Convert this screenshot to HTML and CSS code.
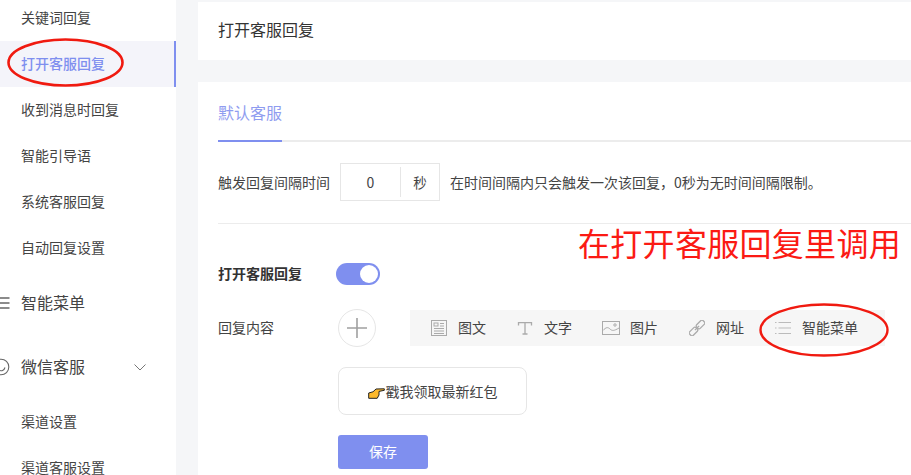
FILE: index.html
```html
<!DOCTYPE html>
<html lang="zh">
<head>
<meta charset="utf-8">
<title>打开客服回复</title>
<link rel="stylesheet" href="styles.css">
</head>
<body>
<div class="page">
  <aside class="sidebar">
    <div class="item">关键词回复</div>
    <div class="item active">打开客服回复</div>
    <div class="item">收到消息时回复</div>
    <div class="item">智能引导语</div>
    <div class="item">系统客服回复</div>
    <div class="item">自动回复设置</div>
    <div class="group">
      <svg class="group-icon" width="10" height="12" viewBox="0 0 10 12"><path d="M0 1h9.500M0 6h9.500M0 11h9.500" stroke="#666" stroke-width="1.500" fill="none"/></svg>
      <span>智能菜单</span>
    </div>
    <div class="group">
      <svg class="group-icon" width="10" height="18" viewBox="0 0 10 18"><circle cx="1" cy="9" r="7.800" fill="none" stroke="#666" stroke-width="1.100"/><path d="M-1 12c2.500 1.500 5 .8 6-2.500" fill="none" stroke="#666" stroke-width="1.100"/></svg>
      <span>微信客服</span>
      <svg class="chevron" width="12" height="7" viewBox="0 0 12 7"><path d="M.5.5 6 6l5.500-5.500" fill="none" stroke="#777" stroke-width="1"/></svg>
    </div>
    <div class="item">渠道设置</div>
    <div class="item">渠道客服设置</div>
  </aside>
  <main class="content">
    <header class="title-card">打开客服回复</header>
    <section class="main-card">
      <div class="tabs"><span class="tab">默认客服</span></div>
      <div class="interval-row">
        <span class="label-wide">触发回复间隔时间</span>
        <div class="seconds">
          <span class="seconds-value">0</span>
          <span class="seconds-unit">秒</span>
        </div>
        <span class="hint">在时间间隔内只会触发一次该回复，0秒为无时间间隔限制。</span>
      </div>
      <div class="switch-row">
        <span class="label-bold">打开客服回复</span>
        <span class="switch"><span class="knob"></span></span>
      </div>
      <div class="reply-row">
        <span class="label">回复内容</span>
        <span class="add"><svg width="20" height="20" viewBox="0 0 20 20"><path d="M10 0v20M0 10h20" stroke="#a0a0a0" stroke-width="1.600" fill="none"/></svg></span>
        <div class="types">
          <span class="type">
            <svg width="16" height="16" viewBox="0 0 16 16" fill="none" stroke="#aaa"><rect x=".5" y=".5" width="15" height="15"/><rect x="3" y="3" width="4" height="3"/><path d="M9 3.500h4M9 6h4M3 8.500h10M3 11h10M3 13.500h10"/></svg>
            <span class="type-text">图文</span>
          </span>
          <span class="type">
            <svg width="16" height="16" viewBox="0 0 16 16" fill="none" stroke="#aaa" stroke-width="1.300"><path d="M1.500 5.500V2.600h13v2.900M8 2.600V14M5.500 14h5"/></svg>
            <span class="type-text">文字</span>
          </span>
          <span class="type">
            <svg class="pic" width="18" height="14" viewBox="0 0 18 14" fill="none" stroke="#aaa"><rect x=".5" y=".5" width="17" height="13"/><path d="M1 9.500c3-3.500 5-3.500 7-1.500s4 2 9-1"/><circle cx="13" cy="4" r="1.200"/></svg>
            <span class="type-text">图片</span>
          </span>
          <span class="type">
            <svg width="16" height="16" viewBox="0 0 16 16" fill="none" stroke="#aaa" stroke-width="1.300"><g transform="rotate(-45 8 8)"><rect x="-1.500" y="5.500" width="9" height="5" rx="1.500"/><rect x="8.500" y="5.500" width="9" height="5" rx="1.500"/><path d="M5 8h6"/></g></svg>
            <span class="type-text">网址</span>
          </span>
          <span class="type">
            <svg width="16" height="14" viewBox="0 0 16 14" fill="none" stroke="#bbb"><path d="M3.500 1.500H16M3.500 7H16M3.500 12.500H16M0 1.500h1.500M0 7h1.500M0 12.500h1.500"/></svg>
            <span class="type-text">智能菜单</span>
          </span>
        </div>
      </div>
      <div class="menu-card">
        <svg class="hand" width="17" height="11" viewBox="0 0 17 11"><path d="M.7 5 5 3.800 8 1l8.300-.2v1.500L11 3.400V7l-1.800 3.300H.7z" fill="#fdb92c" stroke="#222" stroke-width="1"/></svg><span>戳我领取最新红包</span>
      </div>
      <button class="save" type="button">保存</button>
    </section>
  </main>
  <svg class="ring ring-side" width="118" height="50" viewBox="0 0 118 50"><ellipse cx="58.500" cy="24.500" rx="57" ry="23" fill="none" stroke="#f01a10" stroke-width="2.600"/></svg>
  <svg class="ring ring-menu" width="130" height="54" viewBox="0 0 130 54"><ellipse cx="65" cy="27" rx="63.500" ry="25.500" fill="none" stroke="#f01a10" stroke-width="2.400"/></svg>
  <div class="annotation">在打开客服回复里调用</div>
</div>
</body>
</html>
```

FILE: styles.css
```css
* { box-sizing: border-box; }
html, body { margin: 0; padding: 0; height: 100%; overflow: hidden; }
body { font-family: "Noto Sans CJK SC", "Liberation Sans", sans-serif; color: #333; background: #f5f6f8; }
.page { position: relative; display: flex; width: 911px; height: 475px; overflow: hidden; }

.sidebar { flex: 0 0 176px; height: 480px; margin-top: -5px; background: #fff; }
.item { height: 46px; line-height: 44px; padding-left: 21px; font-size: 14px; color: #444; }
.item.active { background: #f4f4fa; color: #7f8fef; border-right: 2px solid #7f8fef; font-weight: 500; }
.group { position: relative; display: flex; align-items: center; height: 64px; padding-left: 21px; font-size: 16px; color: #444; }
.group span { margin-top: -2px; }
.group-icon { position: absolute; left: 0; }
.chevron { position: absolute; left: 134px; top: 29px; }

.content { flex: 1; min-width: 0; padding: 2px 0 0 22px; }
.title-card { height: 58px; line-height: 54px; padding-left: 20px; background: #fff; font-size: 16px; color: #333; }
.main-card { height: 400px; margin-top: 22px; padding-left: 20px; background: #fff; }
.tabs { height: 60px; border-bottom: 2px solid #ececec; }
.tab { display: inline-block; height: 60px; line-height: 60px; border-bottom: 2px solid #7f8fef; font-size: 16px; color: #8f9cf0; }

.interval-row { display: flex; align-items: center; height: 82px; padding-bottom: 1px; border-bottom: 1px solid #ececec; color: #444; }
.label-wide { width: 122px; font-size: 14px; }
.seconds { display: flex; align-items: center; width: 100px; height: 38px; margin-top: -1px; border: 1px solid #e6e6e6; }
.seconds-value { width: 60px; height: 30px; line-height: 30px; border-right: 1px solid #e6e6e6; text-align: center; font-size: 14px; }
.seconds-unit { flex: 1; text-align: center; font-size: 13.500px; }
.hint { margin-left: 10px; font-size: 14px; color: #444; white-space: nowrap; }

.switch-row { display: flex; align-items: center; height: 22px; margin-top: 39px; }
.label-bold { width: 118px; margin-top: -2px; font-size: 14px; font-weight: 700; color: #333; }
.switch { display: block; position: relative; width: 44px; height: 22px; border-radius: 11px; background: #7f8fef; }
.knob { position: absolute; right: 2px; top: 2px; width: 18px; height: 18px; border-radius: 50%; background: #fff; }

.reply-row { display: flex; align-items: center; height: 38px; margin-top: 24px; }
.label { width: 120px; margin-top: -2px; font-size: 14px; color: #444; }
.add { display: flex; align-items: center; justify-content: center; width: 38px; height: 38px; border: 1px solid #e6e6e6; border-radius: 50%; }
.types { display: flex; align-items: center; gap: 31px; width: 475px; height: 36px; margin-left: 34px; padding-left: 21px; background: #f6f6f6; }
.type { display: flex; align-items: center; gap: 11px; font-size: 14px; color: #444; white-space: nowrap; }
.type-text { margin-top: -2px; }
.pic { margin: 0 -1px; }

.menu-card { display: flex; align-items: center; justify-content: center; width: 189px; height: 48px; margin: 20px 0 0 120px; border: 1px solid #e6e6e6; border-radius: 8px; font-size: 14px; color: #444; }
.hand { flex: none; margin: 5px 1px 0 0; }
.save { display: block; width: 90px; height: 34px; margin: 20px 0 0 120px; padding: 0 0 2px; border: 0; border-radius: 3px; background: #7f8fef; color: #fff; font: 14px "Noto Sans CJK SC", sans-serif; }

.ring { position: absolute; }
.ring-side { left: 7px; top: 38px; }
.ring-menu { left: 759px; top: 303px; }
.annotation { position: absolute; left: 578px; top: 219px; font-size: 32px; letter-spacing: .3px; line-height: 46px; color: #fb1a14; white-space: nowrap; }
```
